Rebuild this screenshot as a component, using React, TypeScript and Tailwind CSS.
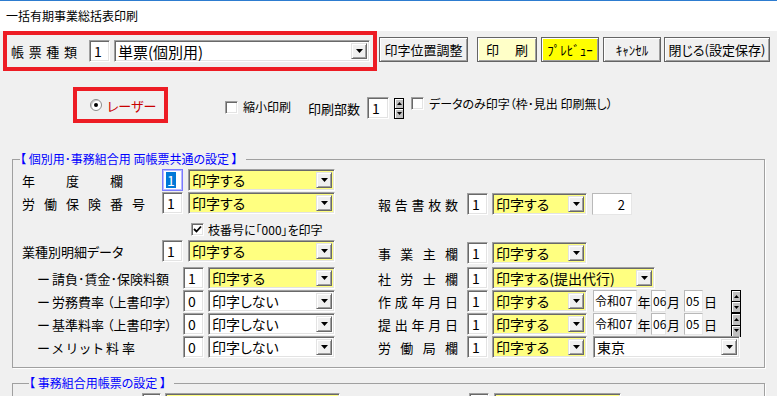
import React from 'react'

const SUNKEN =
  'border border-t-[#a0a0a0] border-l-[#a0a0a0] border-r-white border-b-white shadow-[inset_1px_1px_0_#696969,inset_-1px_-1px_0_#e3e3e3]'
const RAISED =
  'border border-t-[#e3e3e3] border-l-[#e3e3e3] border-r-[#696969] border-b-[#696969] shadow-[inset_1px_1px_0_#fff,inset_-1px_-1px_0_#a0a0a0]'
const BTN =
  'h-[25px] mt-[6px] border border-[#646464] shadow-[inset_1px_1px_0_#fff,inset_-1px_-1px_0_#a0a0a0] flex items-center justify-center text-[13px] whitespace-nowrap'

function Arrow({ up }: { up?: boolean }) {
  return (
    <svg width="7" height="4" viewBox="0 0 7 4">
      <polygon points={up ? '3.5,0 7,4 0,4' : '0,0 7,0 3.5,4'} fill="#000" />
    </svg>
  )
}

function DropBtn() {
  return (
    <div className={`w-[16px] shrink-0 bg-[#f0f0f0] ${RAISED} flex items-center justify-center`}>
      <Arrow />
    </div>
  )
}

function NumBox({ v, w, focused }: { v: string; w: string; focused?: boolean }) {
  if (focused) {
    return (
      <div className={`${w} h-[22px] bg-white border border-[#7a7aff] shadow-[inset_0_0_0_1px_#b8b8ff] flex items-center pl-[3px]`}>
        <span className="bg-[#0078d7] text-white text-[14px] leading-[16px] px-[1px]">{v}</span>
      </div>
    )
  }
  return <div className={`${w} h-[22px] bg-white ${SUNKEN} flex items-center pl-[4px] text-[14px]`}>{v}</div>
}

function Combo({ text, w, yellow, big }: { text: string; w: string; yellow?: boolean; big?: boolean }) {
  return (
    <div className={`${w} h-[22px] ${yellow ? 'bg-[#ffff80]' : 'bg-white'} ${SUNKEN} flex p-[2px]`}>
      <span className={`flex-1 flex items-center pl-[1px] ${big ? 'text-[15px]' : 'text-[14px]'} whitespace-nowrap`}>
        {text}
      </span>
      <DropBtn />
    </div>
  )
}

function Spread({ text, w }: { text: string; w: string }) {
  return (
    <div className={`flex justify-between ${w}`}>
      {[...text].map((c, i) => (
        <span key={i}>{c}</span>
      ))}
    </div>
  )
}

function CheckBox({ checked }: { checked?: boolean }) {
  return (
    <div className={`w-[13px] h-[13px] bg-white ${SUNKEN} flex items-center justify-center`}>
      {checked && (
        <svg width="9" height="9" viewBox="0 0 9 9">
          <path d="M1 4 L3.5 6.5 L8 1.5" stroke="#000" strokeWidth="1.8" fill="none" />
        </svg>
      )}
    </div>
  )
}

function Spin({ h }: { h: string }) {
  return (
    <div className={`w-[10px] ${h} bg-black p-px flex flex-col gap-px`}>
      <div className="flex-1 bg-[#c0c0c0] shadow-[inset_1px_1px_0_#fff] flex items-center justify-center">
        <svg width="5" height="3" viewBox="0 0 5 3">
          <polygon points="2.5,0 5,3 0,3" fill="#000" />
        </svg>
      </div>
      <div className="flex-1 bg-[#c0c0c0] shadow-[inset_1px_1px_0_#fff] flex items-center justify-center">
        <svg width="5" height="3" viewBox="0 0 5 3">
          <polygon points="0,0 5,0 2.5,3" fill="#000" />
        </svg>
      </div>
    </div>
  )
}

function FlatBox({ v, w, right }: { v: string; w: string; right?: boolean }) {
  return (
    <div
      className={`${w} h-[22px] bg-white border border-[#b9b9b9] border-r-[#e6e6e6] border-b-[#e6e6e6] flex items-center whitespace-nowrap ${
        right ? 'justify-end pr-[6px] text-[13px]' : 'pl-px text-[12px]'
      }`}
    >
      {v}
    </div>
  )
}

function RightLabel({ text }: { text: string }) {
  return (
    <div className="h-[22px] flex items-center text-[13px]">
      <Spread text={text} w="w-[80px]" />
    </div>
  )
}

function DateFields() {
  return (
    <div className="flex items-start ml-[6px]">
      <FlatBox v="令和07" w="w-[44px]" />
      <span className="w-[14px] h-[22px] flex items-center justify-center text-[13px]">年</span>
      <FlatBox v="06" w="w-[15px]" />
      <span className="w-[18px] h-[22px] flex items-center pl-[1px] text-[13px]">月</span>
      <FlatBox v="05" w="w-[19px]" />
      <span className="w-[14px] h-[22px] flex items-center pl-[1px] text-[13px]">日</span>
    </div>
  )
}

function DashLabel({ children }: { children: React.ReactNode }) {
  return (
    <div className="w-[161px] h-[22px] flex items-center pl-[15px] whitespace-nowrap">
      <span className="w-[15px]">ー</span>
      {children}
    </div>
  )
}

export default function App() {
  return (
    <div className="w-[777px] h-[396px] overflow-hidden bg-[#f0f0f0] text-black font-['Noto_Sans_CJK_JP',sans-serif] leading-none [font-feature-settings:'palt']">
      {/* window title */}
      <div className="h-[31px] bg-white border-t border-[#2d7cd0] flex items-center pl-[6px] text-[12px]">
        一括有期事業総括表印刷
      </div>

      {/* form type + buttons */}
      <div className="flex h-[40px]">
        <div className="ml-[3px] w-[374px] h-[40px] border-4 border-[#ed1c24] flex items-center pl-[4px] pr-[3px]">
          <div className="text-[13px]">
            <Spread text="帳票種類" w="w-[66px]" />
          </div>
          <div className="ml-[12px]">
            <NumBox v="1" w="w-[21px]" />
          </div>
          <div className="ml-[4px]">
            <Combo text="単票(個別用)" w="w-[256px]" big />
          </div>
        </div>
        <div className={`${BTN} ml-[2px] w-[89px] bg-[#f0f0f0]`}>印字位置調整</div>
        <div className={`${BTN} ml-[9px] w-[60px] bg-[#ffffc8] px-[8px]`}>
          <Spread text="印刷" w="w-full" />
        </div>
        <div className={`${BTN} ml-[4px] w-[58px] bg-[#ffff00]`}>ﾌﾟﾚﾋﾞｭｰ</div>
        <div className={`${BTN} ml-[4px] w-[58px] bg-[#f0f0f0]`}>ｷｬﾝｾﾙ</div>
        <div className={`${BTN} ml-[3px] w-[106px] bg-[#f0f0f0]`}>閉じる(設定保存)</div>
      </div>

      {/* printer / options */}
      <div className="flex items-start h-[82px]">
        <div className="ml-[73px] mt-[16px] w-[95px] h-[36px] border-4 border-[#ed1c24] flex items-center pl-[13px]">
          <div className="w-[12px] h-[12px] rounded-full bg-white border border-[#8a8a8a] shadow-[inset_1px_1px_0_#c8c8c8] flex items-center justify-center">
            <div className="w-[4px] h-[4px] rounded-full bg-black" />
          </div>
          <span className="ml-[5px] text-[13px] text-[#c80000]">レーザー</span>
        </div>
        <div className="ml-[57px] mt-[29px] h-[14px] flex items-center">
          <CheckBox />
          <span className="ml-[5px] w-[48px] text-[12px] whitespace-nowrap">縮小印刷</span>
        </div>
        <div className="ml-[17px] mt-[26px] h-[22px] flex items-center">
          <span className="w-[59px] text-[13px] whitespace-nowrap">印刷部数</span>
          <NumBox v="1" w="w-[22px]" />
          <div className="ml-[5px]">
            <Spin h="h-[21px]" />
          </div>
        </div>
        <div className="ml-[7px] mt-[26px] h-[13px] flex items-center">
          <CheckBox />
          <span className="ml-[5px] text-[12px] whitespace-nowrap">データのみ印字（枠･見出 印刷無し）</span>
        </div>
      </div>

      {/* common settings */}
      <fieldset className="ml-[12px] w-[753px] border border-[#a0a0a0] shadow-[1px_1px_0_#fff]">
        <legend className="ml-[7px] pr-[8px] text-[12px] leading-[12px] text-[#0000ff] whitespace-nowrap">
          【 個別用･事務組合用 両帳票共通の設定 】
        </legend>
        <div className="pl-[9px] pt-[4px] pb-[8px] text-[13px]">
          {/* 年度欄 */}
          <div className="flex h-[23px]">
            <div className="w-[356px] flex items-start">
              <div className="w-[140px] h-[22px] flex items-center">
                <Spread text="年度欄" w="w-[101px]" />
              </div>
              <NumBox v="1" w="w-[21px]" focused />
              <div className="ml-[5px]">
                <Combo text="印字する" w="w-[147px]" yellow />
              </div>
            </div>
          </div>
          {/* 労働保険番号 / 報告書枚数 */}
          <div className="flex h-[23px]">
            <div className="w-[356px] flex items-start">
              <div className="w-[140px] h-[22px] flex items-center">
                <Spread text="労働保険番号" w="w-[123px]" />
              </div>
              <NumBox v="1" w="w-[21px]" />
              <div className="ml-[5px]">
                <Combo text="印字する" w="w-[147px]" yellow />
              </div>
            </div>
            <div className="flex items-start mt-[1px]">
              <RightLabel text="報告書枚数" />
              <div className="ml-[9px]">
                <NumBox v="1" w="w-[21px]" />
              </div>
              <div className="ml-[4px]">
                <Combo text="印字する" w="w-[95px]" yellow />
              </div>
              <div className="ml-[5px]">
                <FlatBox v="2" w="w-[40px]" right />
              </div>
            </div>
          </div>
          {/* 枝番号 */}
          <div className="flex h-[25px]">
            <div className="ml-[169px] mt-[8px] h-[13px] flex items-center">
              <CheckBox checked />
              <span className="ml-[4px] text-[12px] whitespace-nowrap">枝番号に「000」を印字</span>
            </div>
          </div>
          {/* 業種別明細データ / 事業主欄 */}
          <div className="flex h-[27px]">
            <div className="w-[356px] flex items-start">
              <div className="w-[140px] h-[22px] flex items-center whitespace-nowrap">業種別明細データ</div>
              <NumBox v="1" w="w-[21px]" />
              <div className="ml-[5px]">
                <Combo text="印字する" w="w-[147px]" yellow />
              </div>
            </div>
            <div className="flex items-start mt-[2px]">
              <RightLabel text="事業主欄" />
              <div className="ml-[9px]">
                <NumBox v="1" w="w-[21px]" />
              </div>
              <div className="ml-[4px]">
                <Combo text="印字する" w="w-[95px]" yellow />
              </div>
            </div>
          </div>
          {/* 請負 / 社労士欄 */}
          <div className="flex h-[23px]">
            <div className="w-[356px] flex items-start">
              <DashLabel>
                <span>請負･賃金･保険料額</span>
              </DashLabel>
              <NumBox v="1" w="w-[21px]" />
              <div className="ml-[4px]">
                <Combo text="印字する" w="w-[127px]" yellow />
              </div>
            </div>
            <div className="flex items-start">
              <RightLabel text="社労士欄" />
              <div className="ml-[9px]">
                <NumBox v="1" w="w-[21px]" />
              </div>
              <div className="ml-[4px]">
                <Combo text="印字する(提出代行)" w="w-[163px]" yellow />
              </div>
            </div>
          </div>
          {/* 労務費率 / 作成年月日 */}
          <div className="flex h-[23px]">
            <div className="w-[356px] flex items-start">
              <DashLabel>
                <span>労務費率 （上書印字）</span>
              </DashLabel>
              <NumBox v="0" w="w-[21px]" />
              <div className="ml-[4px]">
                <Combo text="印字しない" w="w-[127px]" />
              </div>
            </div>
            <div className="flex items-start">
              <RightLabel text="作成年月日" />
              <div className="ml-[9px]">
                <NumBox v="1" w="w-[21px]" />
              </div>
              <div className="ml-[4px]">
                <Combo text="印字する" w="w-[95px]" yellow />
              </div>
              <DateFields />
              <div className="ml-[14px]">
                <Spin h="h-[23px]" />
              </div>
            </div>
          </div>
          {/* 基準料率 / 提出年月日 */}
          <div className="flex h-[23px]">
            <div className="w-[356px] flex items-start">
              <DashLabel>
                <span>基準料率 （上書印字）</span>
              </DashLabel>
              <NumBox v="0" w="w-[21px]" />
              <div className="ml-[4px]">
                <Combo text="印字しない" w="w-[127px]" />
              </div>
            </div>
            <div className="flex items-start">
              <RightLabel text="提出年月日" />
              <div className="ml-[9px]">
                <NumBox v="1" w="w-[21px]" />
              </div>
              <div className="ml-[4px]">
                <Combo text="印字する" w="w-[95px]" yellow />
              </div>
              <DateFields />
              <div className="ml-[14px]">
                <Spin h="h-[24px]" />
              </div>
            </div>
          </div>
          {/* メリット料率 / 労働局欄 */}
          <div className="flex h-[23px]">
            <div className="w-[356px] flex items-start">
              <DashLabel>
                <Spread text="メリット料率" w="w-[83px]" />
              </DashLabel>
              <NumBox v="0" w="w-[21px]" />
              <div className="ml-[4px]">
                <Combo text="印字しない" w="w-[127px]" />
              </div>
            </div>
            <div className="flex items-start">
              <RightLabel text="労働局欄" />
              <div className="ml-[9px]">
                <NumBox v="1" w="w-[21px]" />
              </div>
              <div className="ml-[4px]">
                <Combo text="印字する" w="w-[95px]" yellow />
              </div>
              <div className="ml-[6px]">
                <Combo text="東京" w="w-[147px]" />
              </div>
            </div>
          </div>
        </div>
      </fieldset>

      {/* office association settings */}
      <fieldset className="ml-[12px] mt-[9px] w-[753px] border border-[#a0a0a0] shadow-[1px_1px_0_#fff]">
        <legend className="ml-[16px] pr-[8px] text-[12px] leading-[12px] text-[#0000ff] whitespace-nowrap">
          【 事務組合用帳票の設定 】
        </legend>
        <div className="pl-[9px] pt-[4px] pb-[8px] flex">
          <div className="w-[356px] flex items-start pl-[120px]">
            <NumBox v="" w="w-[19px]" />
            <div className="ml-[4px]">
              <Combo text="" w="w-[175px]" yellow />
            </div>
          </div>
          <div className="flex items-start pl-[91px]">
            <NumBox v="" w="w-[20px]" />
            <div className="ml-[5px]">
              <Combo text="" w="w-[127px]" yellow />
            </div>
          </div>
        </div>
      </fieldset>
    </div>
  )
}
